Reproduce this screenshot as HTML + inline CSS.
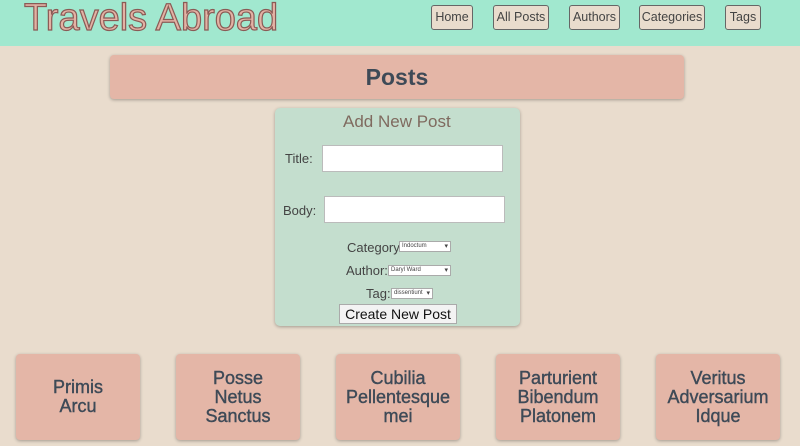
<!DOCTYPE html>
<html><head><style>
body{margin:0;width:800px;height:446px;overflow:hidden;background:#e9dccd;font-family:"Liberation Sans",sans-serif;position:relative;color:#444}
.hdr{position:absolute;left:0;top:0;width:800px;height:46px;background:#a1e8cf}
.logo{position:absolute;left:24px;top:-3px;font-size:38px;color:#e3b2a4;-webkit-text-stroke:1.2px #8a5a55;letter-spacing:0}
.nav{position:absolute;top:5px;height:23px;border:1.5px solid #666;border-radius:3px;background:#e9dccd;font-size:12.5px;line-height:23px;text-align:center;color:#444}
.bar{position:absolute;left:110px;top:55px;width:574px;height:44px;background:#e4b6a7;border-radius:4px;box-shadow:0 1px 3px rgba(0,0,0,.3);text-align:center;font-size:23px;font-weight:bold;line-height:44px;color:#3e4a57}
.card{position:absolute;left:275px;top:108px;width:245px;height:218px;background:#c4dece;border-radius:5px;box-shadow:0 1px 3px rgba(0,0,0,.3)}
.t{position:absolute;font-size:13px;color:#444}
.in{position:absolute;background:#fff;border:1px solid #bbb;height:25px}
.sel{position:absolute;height:9px;border:1px solid #aaa;background:#fff;font-size:6px;line-height:9px;padding-left:2px}
.sel:after{content:"▾";position:absolute;right:2px;top:0;font-size:7px}
.btn{position:absolute;left:339px;top:304px;width:116px;height:18px;background:#f3f3f3;border:1px solid #aaa;font-size:14px;line-height:18px;text-align:center;color:#111}
.pc{position:absolute;top:354px;width:124px;height:86px;background:#e4b6a7;border-radius:4px;box-shadow:0 1px 3px rgba(0,0,0,.3);display:flex;align-items:center;justify-content:center;text-align:center;font-size:18px;line-height:19px;color:#3e4a57;-webkit-text-stroke:0.4px #3e4a57}
</style></head><body>
<div class="hdr"><div class="logo">Travels Abroad</div>
<div class="nav" style="left:431px;width:40px">Home</div>
<div class="nav" style="left:493px;width:54px">All Posts</div>
<div class="nav" style="left:569px;width:49px">Authors</div>
<div class="nav" style="left:639px;width:64px">Categories</div>
<div class="nav" style="left:725px;width:34px">Tags</div>
</div>
<div class="bar">Posts</div>
<div class="card"></div>
<div class="t" style="left:343px;top:112px;font-size:17px;color:#7f6a5f">Add New Post</div>
<div class="t" style="left:285px;top:151px">Title:</div>
<div class="in" style="left:322px;top:145px;width:179px"></div>
<div class="t" style="left:283px;top:203px">Body:</div>
<div class="in" style="left:324px;top:196px;width:179px"></div>
<div class="t" style="left:347px;top:240px">Category:</div>
<div class="sel" style="left:399px;top:241px;width:48px">Indoctum</div>
<div class="t" style="left:346px;top:263px">Author:</div>
<div class="sel" style="left:388px;top:265px;width:59px">Daryl Ward</div>
<div class="t" style="left:366px;top:286px">Tag:</div>
<div class="sel" style="left:391px;top:288px;width:38px">dissentiunt</div>
<div class="btn">Create New Post</div>
<div class="pc" style="left:16px">Primis<br>Arcu</div>
<div class="pc" style="left:176px">Posse<br>Netus<br>Sanctus</div>
<div class="pc" style="left:336px">Cubilia<br>Pellentesque<br>mei</div>
<div class="pc" style="left:496px">Parturient<br>Bibendum<br>Platonem</div>
<div class="pc" style="left:656px">Veritus<br>Adversarium<br>Idque</div>
</body></html>
